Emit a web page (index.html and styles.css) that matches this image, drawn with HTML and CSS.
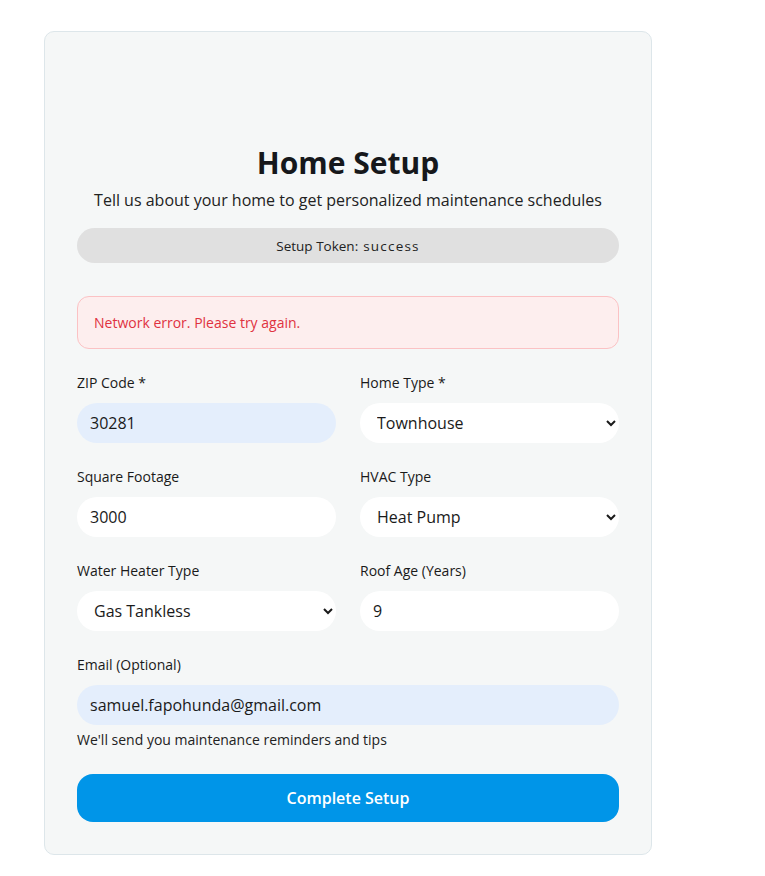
FILE: index.html
```html
<!DOCTYPE html>
<html lang="en">
<head>
<meta charset="utf-8">
<title>Home Setup</title>
<link rel="stylesheet" href="styles.css">
</head>
<body>
<main class="card">
  <h1 class="title">Home Setup</h1>
  <p class="subtitle">Tell us about your home to get personalized maintenance schedules</p>
  <div class="token">Setup Token: <span class="token-value">success</span></div>
  <div class="error">Network error. Please try again.</div>
  <form class="form">
    <div class="grid">
      <div class="field">
        <label class="label">ZIP Code *</label>
        <input class="control autofill" type="text" value="30281">
      </div>
      <div class="field">
        <label class="label">Home Type *</label>
        <select class="control select"><option>Townhouse</option></select>
      </div>
      <div class="field">
        <label class="label">Square Footage</label>
        <input class="control" type="text" value="3000">
      </div>
      <div class="field">
        <label class="label">HVAC Type</label>
        <select class="control select"><option>Heat Pump</option></select>
      </div>
      <div class="field">
        <label class="label">Water Heater Type</label>
        <select class="control select"><option>Gas Tankless</option></select>
      </div>
      <div class="field">
        <label class="label">Roof Age (Years)</label>
        <input class="control" type="text" value="9">
      </div>
      <div class="field wide">
        <label class="label">Email (Optional)</label>
        <input class="control autofill" type="text" value="samuel.fapohunda@gmail.com">
        <p class="help">We'll send you maintenance reminders and tips</p>
      </div>
    </div>
    <button class="submit" type="button">Complete Setup</button>
  </form>
</main>
</body>
</html>
```
FILE: styles.css
```css
* { box-sizing: border-box; }
html, body { margin: 0; padding: 0; background: #ffffff; }
body {
  font-family: "Open Sans", "Noto Sans", sans-serif;
  color: #1a1a1a;
  padding: 31px 0 0 44px;
}
.card {
  width: 608px;
  background: #f5f7f7;
  border: 1px solid #dde6ea;
  border-radius: 10px;
  padding: 112px 32px 32px;
  display: flex;
  flex-direction: column;
}
.title {
  margin: 0;
  text-align: center;
  font-size: 30px;
  font-weight: 700;
  line-height: 38px;
  color: #16181b;
}
.subtitle {
  margin: 6px 0 0;
  text-align: center;
  font-size: 16px;
  line-height: 24px;
  color: #222;
}
.token {
  margin-top: 16px;
  height: 35px;
  border-radius: 18px;
  background: #e0e0e0;
  display: flex;
  align-items: center;
  justify-content: center;
  font-size: 13.5px;
  color: #222;
}
.token-value { margin-left: 5px; letter-spacing: 1.2px; }
.error {
  margin-top: 33px;
  height: 53px;
  border: 1px solid #fbc2c4;
  background: #fdeeee;
  border-radius: 12px;
  padding: 0 16px;
  display: flex;
  align-items: center;
  font-size: 14px;
  color: #e0323f;
}
.form { margin-top: 24px; display: flex; flex-direction: column; }
.grid {
  display: grid;
  grid-template-columns: 1fr 1fr;
  column-gap: 24px;
  row-gap: 24px;
}
.field { display: flex; flex-direction: column; }
.wide { grid-column: 1 / span 2; }
.label {
  font-size: 14px;
  line-height: 20px;
  margin-bottom: 10px;
  color: #1a1a1a;
}
.control {
  height: 40px;
  border: none;
  border-radius: 20px;
  background: #ffffff;
  font-family: "Open Sans", "Noto Sans", sans-serif;
  font-size: 16px;
  color: #1a1a1a;
  padding: 0 13px;
  outline: none;
  width: 100%;
}
.autofill { background: #e4eefc; }
.select { padding: 0 8px 0 13px; }
.help {
  margin: 5px 0 0;
  font-size: 14px;
  line-height: 20px;
  color: #222;
}
.submit {
  margin-top: 24px;
  height: 48px;
  border: none;
  border-radius: 16px;
  background: #0095e8;
  color: #ffffff;
  font-family: "Open Sans", "Noto Sans", sans-serif;
  font-size: 16px;
  font-weight: 600;
  width: 100%;
}
```
